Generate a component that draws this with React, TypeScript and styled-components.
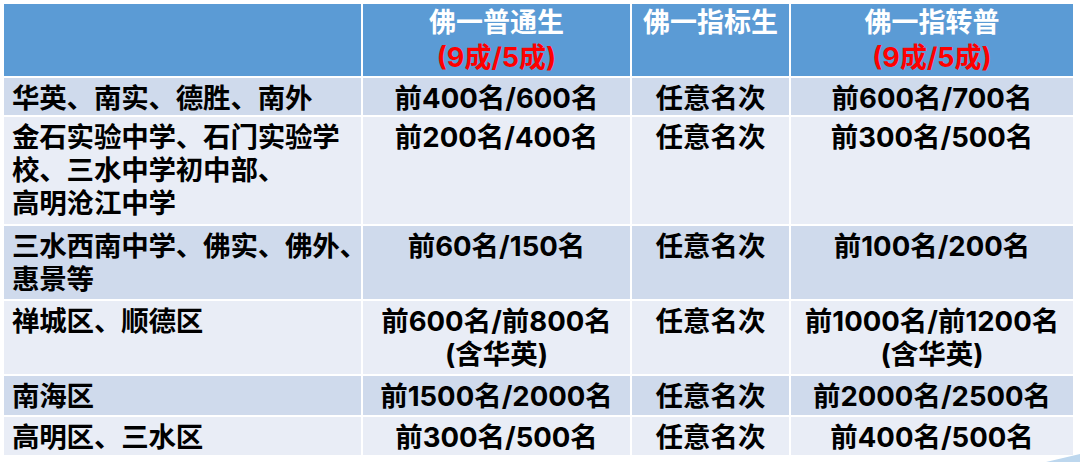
import React from 'react';
import styled, { createGlobalStyle } from 'styled-components';

const GlobalStyle = createGlobalStyle`
  html, body {
    margin: 0;
    padding: 0;
    background: #ffffff;
  }
  body {
    font-family: Inter, "Noto Sans CJK SC", sans-serif;
  }
`;

const Page = styled.div`
  position: relative;
  width: 1080px;
  height: 462px;
  overflow: hidden;
  padding: 4px 0 0 4px;
  box-sizing: border-box;
  background: #ffffff;
`;

const Grid = styled.div`
  display: grid;
  grid-template-columns: 357px 267px 157px 282px;
  grid-template-rows: 72px 37px 107px 73px 73px 39px 38px;
  gap: 2px;
  width: 1069px;
  background: #ffffff;
`;

const HeadCell = styled.div`
  background: #5b9bd5;
  color: #ffffff;
  font-weight: 700;
  font-size: 27px;
  line-height: 35px;
  text-align: center;
  padding-top: 1px;
`;

const Red = styled.div`
  color: #ff0000;
`;

const Cell = styled.div<{ $shade: boolean; $left?: boolean }>`
  background: ${({ $shade }) => ($shade ? '#cfdaec' : '#e9edf6')};
  color: #000000;
  font-weight: 700;
  font-size: 27.5px;
  line-height: 33px;
  padding: ${({ $left }) => ($left ? '4px 0 0 8px' : '4px 0 0 0')};
  text-align: ${({ $left }) => ($left ? 'left' : 'center')};
  white-space: pre;
  letter-spacing: ${({ $left }) => ($left ? '-0.2px' : '0')};
`;

const Corner = styled.svg`
  position: absolute;
  right: 0;
  bottom: 0;
`;

const header = [
  { title: '', note: '' },
  { title: '佛一普通生', note: '(9成/5成)' },
  { title: '佛一指标生', note: '' },
  { title: '佛一指转普', note: '(9成/5成)' },
];

const rows = [
  ['华英、南实、德胜、南外', '前400名/600名', '任意名次', '前600名/700名'],
  ['金石实验中学、石门实验学\n校、三水中学初中部、\n高明沧江中学', '前200名/400名', '任意名次', '前300名/500名'],
  ['三水西南中学、佛实、佛外、\n惠景等', '前60名/150名', '任意名次', '前100名/200名'],
  ['禅城区、顺德区', '前600名/前800名\n(含华英)', '任意名次', '前1000名/前1200名\n(含华英)'],
  ['南海区', '前1500名/2000名', '任意名次', '前2000名/2500名'],
  ['高明区、三水区', '前300名/500名', '任意名次', '前400名/500名'],
];

export default function App() {
  return (
    <>
      <GlobalStyle />
      <Page>
        <Grid>
          {header.map((h, i) => (
            <HeadCell key={i}>
              {h.title}
              {h.note && <Red>{h.note}</Red>}
            </HeadCell>
          ))}
          {rows.map((row, r) =>
            row.map((text, c) => (
              <Cell key={`${r}-${c}`} $shade={r % 2 === 0} $left={c === 0}>
                {text}
              </Cell>
            ))
          )}
        </Grid>
        <Corner width="40" height="14" viewBox="0 0 40 14">
          <path d="M6 14 L40 6 L40 14 Z" fill="#bdd7ee" />
        </Corner>
      </Page>
    </>
  );
}
